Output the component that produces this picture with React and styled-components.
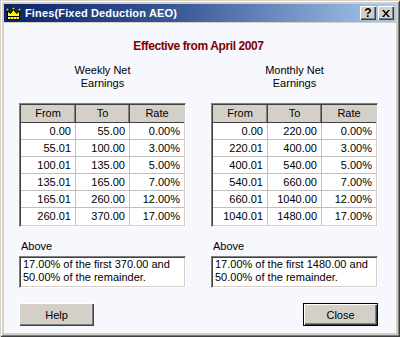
import styled, { createGlobalStyle } from 'styled-components';

const GlobalStyle = createGlobalStyle`
  html, body {
    margin: 0;
    padding: 0;
    background: #d4d0c8;
  }
  body {
    font-family: "Liberation Sans", Arial, sans-serif;
  }
`;

const weekly = [
  ['0.00', '55.00', '0.00%'],
  ['55.01', '100.00', '3.00%'],
  ['100.01', '135.00', '5.00%'],
  ['135.01', '165.00', '7.00%'],
  ['165.01', '260.00', '12.00%'],
  ['260.01', '370.00', '17.00%'],
];

const monthly = [
  ['0.00', '220.00', '0.00%'],
  ['220.01', '400.00', '3.00%'],
  ['400.01', '540.00', '5.00%'],
  ['540.01', '660.00', '7.00%'],
  ['660.01', '1040.00', '12.00%'],
  ['1040.01', '1480.00', '17.00%'],
];

function Crown() {
  return (
    <svg width="15" height="13" viewBox="0 0 15 13">
      <rect x="1.5" y="9.5" width="12" height="3" fill="#ffff00" stroke="#000" />
      <path d="M1.5 9.5 L1.5 4 L4.5 6.5 L7.5 2.5 L10.5 6.5 L13.5 4 L13.5 9.5 Z" fill="#ffff00" stroke="#000" />
      <circle cx="1.5" cy="2.5" r="1.3" fill="#ffff00" stroke="#000" strokeWidth="0.8" />
      <circle cx="7.5" cy="1.5" r="1.3" fill="#ffff00" stroke="#000" strokeWidth="0.8" />
      <circle cx="13.5" cy="2.5" r="1.3" fill="#ffff00" stroke="#000" strokeWidth="0.8" />
      <rect x="4" y="10.5" width="1" height="1" fill="#c00000" />
      <rect x="7" y="10.5" width="1" height="1" fill="#c00000" />
      <rect x="10" y="10.5" width="1" height="1" fill="#c00000" />
    </svg>
  );
}

function Panel({ caption, rows, text, button, align, isDefault }) {
  return (
    <Column>
      <Caption>
        {caption[0]}
        <br />
        {caption[1]}
      </Caption>
      <Grid>
        <Head>From</Head>
        <Head>To</Head>
        <Head $last>Rate</Head>
        {rows.map((r, i) =>
          r.map((v, j) => (
            <Cell key={i + '-' + j} $last={j === 2} $bottom={i === rows.length - 1}>
              {v}
            </Cell>
          ))
        )}
      </Grid>
      <Label>Above</Label>
      <TextBox>{text}</TextBox>
      <ButtonRow $align={align}>
        <Button $default={isDefault}>{button}</Button>
      </ButtonRow>
    </Column>
  );
}

export default function App() {
  return (
    <>
      <GlobalStyle />
      <Window>
        <TitleBar>
          <Crown />
          <Title>Fines(Fixed Deduction AEO)</Title>
          <TitleButtons>
            <TitleButton>?</TitleButton>
            <TitleButton>
              <svg width="8" height="7" viewBox="0 0 8 7">
                <path d="M0 0 L2 0 L4 2.5 L6 0 L8 0 L5 3.5 L8 7 L6 7 L4 4.5 L2 7 L0 7 L3 3.5 Z" fill="#000" />
              </svg>
            </TitleButton>
          </TitleButtons>
        </TitleBar>
        <Body>
          <Heading>Effective from April 2007</Heading>
          <Columns>
            <Panel
              caption={['Weekly Net', 'Earnings']}
              rows={weekly}
              text={<>17.00% of the first 370.00 and<br />50.00% of the remainder.</>}
              button="Help"
              align="start"
            />
            <Panel
              caption={['Monthly Net', 'Earnings']}
              rows={monthly}
              text={<>17.00% of the first 1480.00 and<br />50.00% of the remainder.</>}
              button="Close"
              align="end"
              isDefault
            />
          </Columns>
        </Body>
      </Window>
    </>
  );
}

const Window = styled.div`
  width: 400px;
  height: 337px;
  box-sizing: border-box;
  padding: 4px;
  display: flex;
  flex-direction: column;
  background: #d4d0c8;
  box-shadow: inset 1px 1px #d4d0c8, inset -1px -1px #404040,
    inset 2px 2px #ffffff, inset -2px -2px #808080;
`;

const TitleBar = styled.div`
  height: 18px;
  display: flex;
  align-items: center;
  padding: 0 2px 0 2px;
  background: linear-gradient(to right, #0a246a 0%, #3a5a98 45%, #a6caf0 100%);
`;

const Title = styled.span`
  margin-left: 4px;
  color: #fff;
  font: bold 11px "Liberation Sans", Arial, sans-serif;
  letter-spacing: 0.15px;
`;

const TitleButtons = styled.div`
  margin-left: auto;
  display: flex;
  gap: 2px;
`;

const TitleButton = styled.div`
  width: 16px;
  height: 14px;
  box-sizing: border-box;
  display: flex;
  align-items: center;
  justify-content: center;
  background: #d4d0c8;
  box-shadow: inset 1px 1px #fff, inset -1px -1px #404040, inset -2px -2px #808080;
  font: bold 12px "Liberation Sans", Arial, sans-serif;
  color: #000;
`;

const Body = styled.div`
  flex: 1;
  margin-top: 1px;
  padding: 15px 18px 0 15px;
  background: #f7f7fe;
  font-size: 11px;
  color: #000;
`;

const Heading = styled.div`
  height: 16px;
  text-align: center;
  color: #800000;
  font: bold 12px/16px "Liberation Sans", Arial, sans-serif;
  letter-spacing: -0.4px;
`;

const Columns = styled.div`
  display: grid;
  grid-template-columns: 167px 167px;
  column-gap: 25px;
  margin-top: 10px;
`;

const Column = styled.div`
  display: flex;
  flex-direction: column;
`;

const Caption = styled.div`
  text-align: center;
  line-height: 13px;
  height: 26px;
`;

const Grid = styled.div`
  margin-top: 13px;
  display: grid;
  grid-template-columns: 55px 54px 54px;
  grid-template-rows: 18px repeat(6, 17px);
  border-style: solid;
  border-width: 1px;
  border-color: #808080 #fff #fff #808080;
  box-shadow: inset 1px 1px #404040, inset -1px -1px #d4d0c8;
  padding: 1px;
  background: #fff;
`;

const Head = styled.div`
  box-sizing: border-box;
  background: #d4d0c8;
  border-bottom: 1px solid #404040;
  border-right: ${(p) => (p.$last ? 'none' : '1px solid #404040')};
  box-shadow: ${(p) => (p.$last ? 'none' : 'inset -1px 0 #808080')};
  text-align: center;
  line-height: 17px;
`;

const Cell = styled.div`
  box-sizing: border-box;
  border-right: ${(p) => (p.$last ? 'none' : '1px solid #c0c0c0')};
  border-bottom: ${(p) => (p.$bottom ? 'none' : '1px solid #c0c0c0')};
  text-align: right;
  padding-right: 4px;
  line-height: 16px;
`;

const Label = styled.div`
  margin-top: 13px;
  line-height: 13px;
  padding-left: 2px;
`;

const TextBox = styled.div`
  margin-top: 3px;
  height: 32px;
  box-sizing: border-box;
  padding: 1px 1px 0 3px;
  background: #fff;
  line-height: 13px;
  border-style: solid;
  border-width: 1px;
  border-color: #808080 #fff #fff #808080;
  box-shadow: inset 1px 1px #404040, inset -1px -1px #d4d0c8;
`;

const ButtonRow = styled.div`
  margin-top: 15px;
  display: flex;
  justify-content: ${(p) => (p.$align === 'end' ? 'flex-end' : 'flex-start')};
`;

const Button = styled.button`
  width: 75px;
  height: 23px;
  box-sizing: border-box;
  padding: 0;
  background: #d4d0c8;
  font: 11px "Liberation Sans", Arial, sans-serif;
  color: #000;
  border: ${(p) => (p.$default ? '1px solid #000' : 'none')};
  box-shadow: inset 1px 1px #fff, inset -1px -1px #404040, inset -2px -2px #808080;
`;
